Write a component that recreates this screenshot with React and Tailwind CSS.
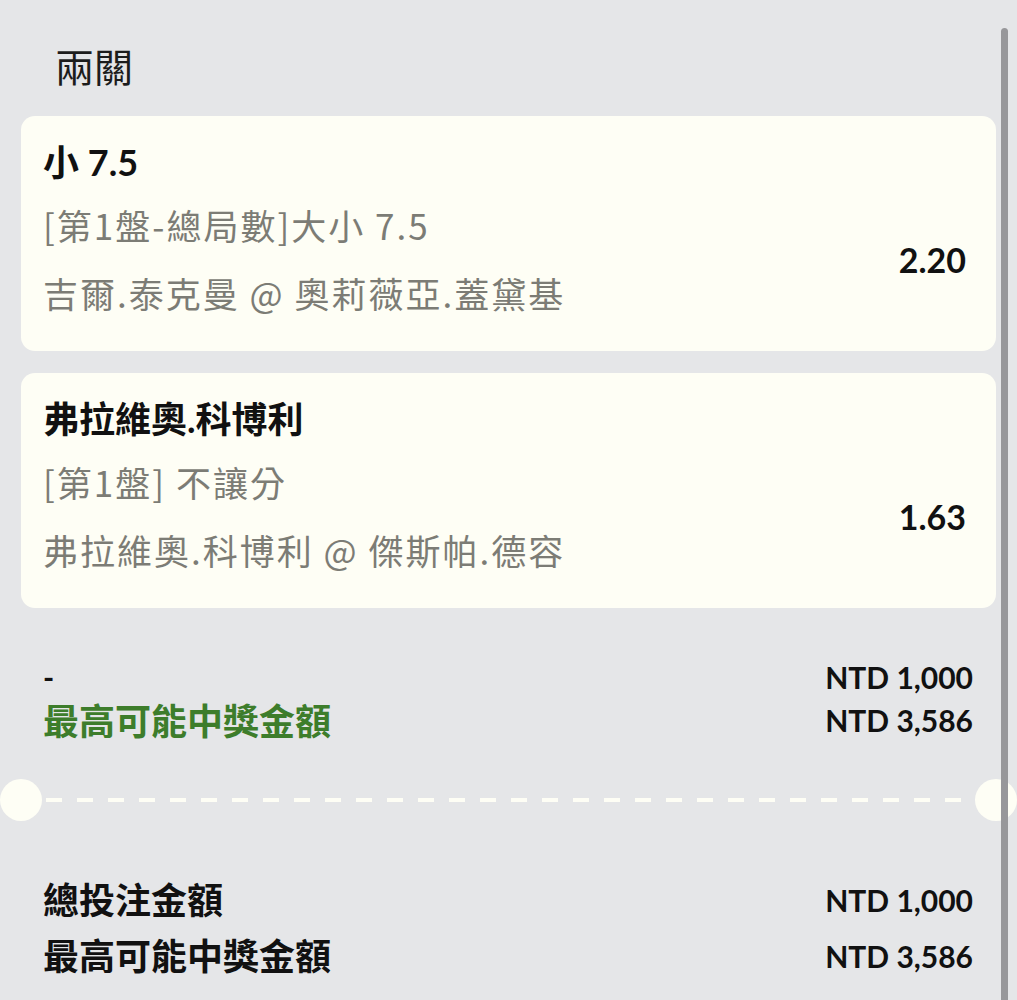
const latin = { fontFamily: 'Lato, "Noto Sans CJK TC", sans-serif' }
const cjk = { fontFamily: '"Noto Sans CJK TC", "Noto Sans", sans-serif' }

const legs = [
  {
    pick: '小 7.5',
    market: '[第1盤-總局數]大小 7.5',
    match: '吉爾.泰克曼 @ 奧莉薇亞.蓋黛基',
    odds: '2.20',
  },
  {
    pick: '弗拉維奧.科博利',
    market: '[第1盤] 不讓分',
    match: '弗拉維奧.科博利 @ 傑斯帕.德容',
    odds: '1.63',
  },
]

function LegCard({ leg, first }) {
  return (
    <div className={`mx-[21px] rounded-[14px] bg-[#fefef5] pl-[22px] pr-[30px] pt-[22px] pb-[34px] ${first ? '' : 'mt-[22px]'}`}>
      <div className="text-[36px] leading-[48px] font-bold text-[#111]" style={latin}>{leg.pick}</div>
      <div className="mt-[15px] flex items-center justify-between">
        <div className="text-[#7c7c75] tracking-[2px]" style={cjk}>
          <div className="text-[35px] leading-[48px]">{leg.market}</div>
          <div className="mt-[20px] text-[35px] leading-[48px]">{leg.match}</div>
        </div>
        <div className="text-[34px] font-bold text-[#111]" style={latin}>{leg.odds}</div>
      </div>
    </div>
  )
}

function AmountRow({ label, value, labelClass, h }) {
  return (
    <div className={`flex items-center justify-between ${h}`}>
      <div className={labelClass} style={latin}>{label}</div>
      <div className="text-[30px] font-bold text-[#111]" style={latin}>{value}</div>
    </div>
  )
}

export default function App() {
  return (
    <div className="relative w-[1017px] h-[1000px] overflow-hidden bg-[#e5e6e8]">
      {/* scrollbar */}
      <div className="absolute left-[1001px] top-[28px] w-[7px] h-[990px] rounded-full bg-[#97979a] z-10" />

      <div className="h-[116px] pt-[40px] pl-[55px]">
        <div className="text-[39px] leading-[50px] text-[#1c1c1c]" style={cjk}>兩關</div>
      </div>

      {legs.map((leg, i) => (
        <LegCard key={i} leg={leg} first={i === 0} />
      ))}

      <div className="pt-[48px] pl-[43px] pr-[44px]">
        <AmountRow h="h-[43px]" label="-" value="NTD 1,000" labelClass="text-[30px] font-bold text-[#111]" />
        <AmountRow h="h-[43px]" label="最高可能中獎金額" value="NTD 3,586" labelClass="text-[36px] font-bold text-[#3d7d2b]" />
      </div>

      {/* ticket divider */}
      <div className="mt-[37px] flex items-center h-[42px]">
        <div className="w-[42px] h-[42px] rounded-full bg-[#fefef5] shrink-0" />
        <div className="flex-1 mx-[4px] h-[4px] bg-[repeating-linear-gradient(90deg,#fefef5_0_16px,transparent_16px_31px)]" />
        <div className="w-[42px] h-[42px] rounded-full bg-[#fefef5] shrink-0" />
      </div>

      <div className="mt-[51px] pl-[43px] pr-[44px]">
        <AmountRow h="h-[56px]" label="總投注金額" value="NTD 1,000" labelClass="text-[36px] font-bold text-[#111]" />
        <AmountRow h="h-[56px]" label="最高可能中獎金額" value="NTD 3,586" labelClass="text-[36px] font-bold text-[#111]" />
      </div>
    </div>
  )
}
